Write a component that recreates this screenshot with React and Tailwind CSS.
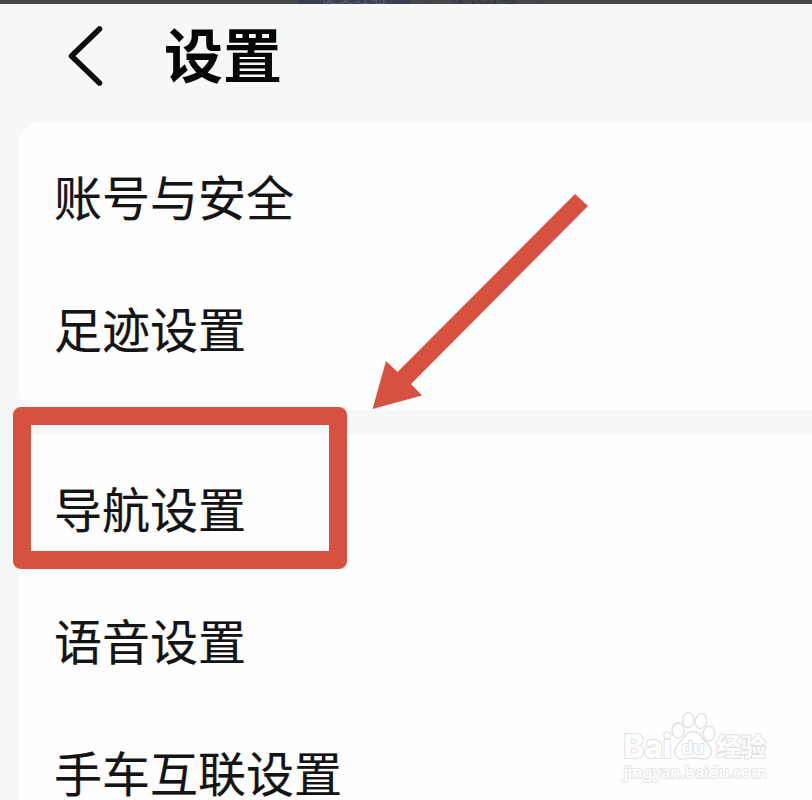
import React from 'react'

const groups = [
  { id: 'account', className: 'rounded-l-[22px]', items: ['账号与安全', '足迹设置'] },
  { id: 'navigation', className: 'rounded-tl-[22px]', items: ['导航设置', '语音设置', '手车互联设置'] },
]

const TopStrip = () => (
  <div className="flex h-1 shrink-0 items-end overflow-hidden bg-[#464646] pl-[298px] text-[16.5px] leading-none">
    <div className="flex h-6 w-28 shrink-0 items-end justify-center bg-[#3b3f55] text-[#5a5b6a]">
      <span>提交经验</span>
    </div>
    <div className="ml-4 flex h-6 w-[116px] shrink-0 items-end justify-center border-x-2 border-[#3c405a] text-[#33364c]">
      <span>发表经验</span>
    </div>
  </div>
)

const Header = () => (
  <header className="flex h-[118px] shrink-0 items-start">
    <svg className="ml-[66px] mt-[19px] h-16 w-10 shrink-0" viewBox="0 0 40 64" fill="none">
      <path d="M33.5 6 5.5 33 33.5 60" stroke="#0b0c0e" strokeWidth="5.5" strokeLinecap="round" strokeLinejoin="round" />
    </svg>
    <h1 className="ml-[58px] mt-3.5 text-[59px] font-bold leading-[70px] text-[#060709]">设置</h1>
  </header>
)

const SettingsGroup = ({ items, className }) => (
  <section className={`ml-[18px] shrink-0 bg-[#fefefe] py-3 ${className}`}>
    {items.map(item => (
      <div
        key={item}
        className="flex h-33 items-center pb-2.5 pl-9 text-[48px] leading-none text-[#141414] [-webkit-text-stroke:0.2px_#141414]"
      >
        {item}
      </div>
    ))}
  </section>
)

const Arrow = () => (
  <svg className="absolute left-[360px] top-[180px] h-60 w-60" viewBox="0 0 240 240">
    <path d="M12.5 229 26 181 37.5 192 215 14 228 26 51 204 62 215.5Z" fill="#d75140" />
  </svg>
)

const Watermark = () => (
  <svg className="absolute left-[616px] top-[706px] h-20 w-40 overflow-visible" viewBox="0 0 160 80" fill="#fff" strokeLinejoin="round">
    <g stroke="#dfdfdf" strokeWidth="1.3">
      <ellipse cx="62" cy="24.500" rx="6" ry="7.500" />
      <ellipse cx="72.300" cy="14" rx="5.700" ry="7.700" />
      <ellipse cx="85" cy="15" rx="5.700" ry="7.500" transform="rotate(12 85 15)" />
      <ellipse cx="93" cy="27.500" rx="6" ry="7.300" />
      <path d="M77 25.500C70 25.500 69 31 65 35C61 39 58 42 59 47C60 53 65 54 70 52.500C75 51.500 79 51.500 84 52.500C90 54 95 52 95.500 46C96 40 91 38 88 34C84 29 83 25.500 77 25.500Z" />
    </g>
    <g stroke="#dfdfdf" strokeWidth="2" paintOrder="stroke">
      <text x="7.500" y="51.500" fontSize="33" fontWeight="800" textLength="48" lengthAdjust="spacingAndGlyphs" fontFamily="Inter, sans-serif">Bai</text>
      <text x="65.500" y="47.500" fontSize="19" fontWeight="bold" textLength="23" lengthAdjust="spacingAndGlyphs" fontFamily="Liberation Sans, sans-serif">du</text>
      <text x="100" y="49.500" fontSize="25" fontWeight="bold" textLength="50" fontFamily="Noto Sans CJK SC, sans-serif">经验</text>
      <text x="7.500" y="71.500" fontSize="17" fontWeight="500" stroke="#e6e6e6" textLength="143" lengthAdjust="spacingAndGlyphs" fontFamily="Noto Sans, sans-serif">jingyan.baidu.com</text>
    </g>
  </svg>
)

const App = () => (
  <div className="relative flex h-[800px] w-[812px] flex-col overflow-hidden bg-[#f5f7f8] font-['Noto_Sans_CJK_SC',sans-serif]">
    <TopStrip />
    <Header />
    <main className="flex flex-col gap-6">
      {groups.map(group => (
        <SettingsGroup key={group.id} items={group.items} className={group.className} />
      ))}
    </main>
    {/* Highlight around the navigation entry */}
    <div className="absolute left-[13px] top-[407px] h-[162px] w-[334px] rounded-lg border-[18px] border-[#d75140]" />
    <Arrow />
    <Watermark />
  </div>
)

export default App
